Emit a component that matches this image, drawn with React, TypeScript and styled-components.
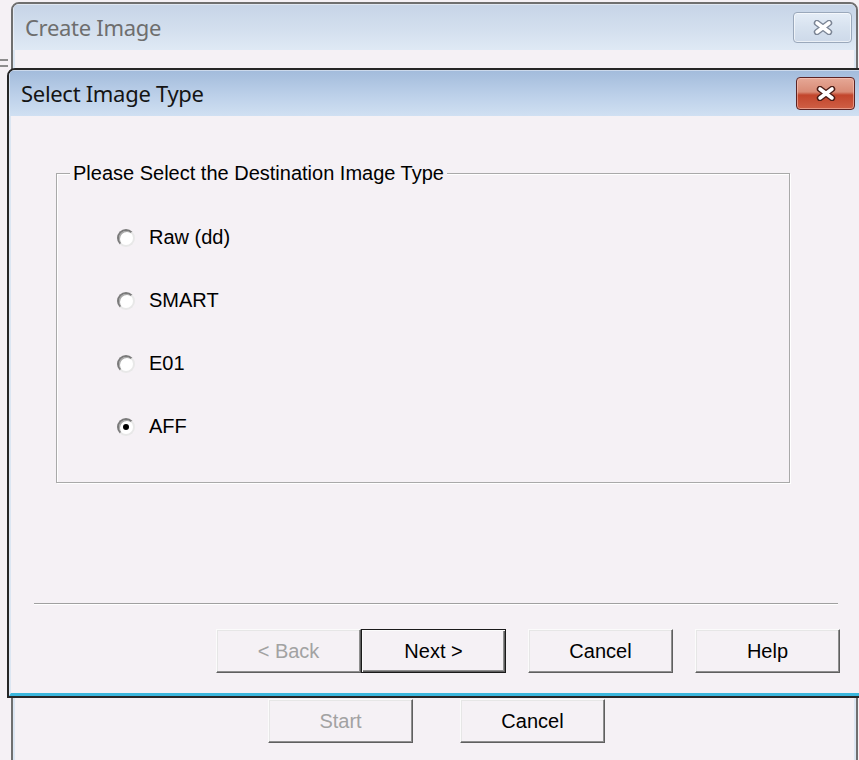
import React from "react";
import styled, { createGlobalStyle, css } from "styled-components";

const GlobalStyle = createGlobalStyle`
  html, body {
    margin: 0;
    padding: 0;
  }
  body {
    background: #f5f1f5;
    font-family: "Liberation Sans", Arial, sans-serif;
    overflow: hidden;
  }
`;

const FACE = "#f5f1f5";

export default function App() {
  return (
    <Desktop>
      <GlobalStyle />
      <EdgeStub />

      <Window $left={11} $top={2} $width={847} $height={780}>
        <TitleBar $padRight={4}>
          <TitleText $dim>Create Image</TitleText>
          <CloseButton>
            <CloseGlyph outline="#7b8595" />
          </CloseButton>
        </TitleBar>
        <Client>
          <BackButtonRow>
            <PushButton disabled>Start</PushButton>
            <PushButton>Cancel</PushButton>
          </BackButtonRow>
        </Client>
      </Window>

      <Window $left={7} $top={68} $width={866} $height={630} $active>
        <TitleBar $padRight={16} $active>
          <TitleText>Select Image Type</TitleText>
          <CloseButton $active>
            <CloseGlyph outline="#4a1c16" />
          </CloseButton>
        </TitleBar>
        <WizardClient>
          <GroupBox>
            <GroupCaption>Please Select the Destination Image Type</GroupCaption>
            <RadioList>
              <RadioRow label="Raw (dd)" />
              <RadioRow label="SMART" />
              <RadioRow label="E01" />
              <RadioRow label="AFF" checked />
            </RadioList>
          </GroupBox>
          <Separator />
          <WizardButtons>
            <PushButton disabled>&lt; Back</PushButton>
            <PushButton $default>Next &gt;</PushButton>
            <PushButton $gap>Cancel</PushButton>
            <PushButton $gap>Help</PushButton>
          </WizardButtons>
        </WizardClient>
      </Window>
    </Desktop>
  );
}

function RadioRow({ label, checked }: { label: string; checked?: boolean }) {
  return (
    <RadioItem>
      <RadioDot $checked={checked} />
      <span>{label}</span>
    </RadioItem>
  );
}

// white "x" with a dark rim, as on the caption buttons
function CloseGlyph({ outline }: { outline: string }) {
  return (
    <svg width="22" height="15" viewBox="0 0 22 15">
      <g strokeLinecap="round">
        <path d="M5 3 L17 12 M17 3 L5 12" stroke={outline} strokeWidth="6.4" />
        <path d="M5 3 L17 12 M17 3 L5 12" stroke="#ffffff" strokeWidth="3.6" />
      </g>
    </svg>
  );
}

const Desktop = styled.div`
  position: relative;
  width: 859px;
  height: 760px;
  overflow: hidden;
  background: ${FACE};
`;

/* edge of another window peeking out on the far left */
const EdgeStub = styled.div`
  position: absolute;
  left: -4px;
  top: 59px;
  width: 12px;
  height: 4px;
  border-top: 2px solid #8d8d8d;
  border-bottom: 2px solid #8d8d8d;
`;

const Window = styled.div<{
  $left: number;
  $top: number;
  $width: number;
  $height: number;
  $active?: boolean;
}>`
  position: absolute;
  left: ${(p) => p.$left}px;
  top: ${(p) => p.$top}px;
  width: ${(p) => p.$width}px;
  height: ${(p) => p.$height}px;
  box-sizing: border-box;
  display: flex;
  flex-direction: column;
  border: 2px solid ${(p) => (p.$active ? "#262626" : "#6f6f6f")};
  border-radius: 8px 8px 0 0;
  background: ${FACE};
  overflow: hidden;
`;

const TitleBar = styled.div<{ $padRight: number; $active?: boolean }>`
  flex: none;
  height: 46px;
  display: flex;
  align-items: center;
  justify-content: space-between;
  padding: 0 ${(p) => p.$padRight}px 0 12px;
  background: ${(p) =>
    p.$active
      ? "linear-gradient(#a2bbdb, #bcd0e9 55%, #d0e0f2)"
      : "linear-gradient(#c6d4e7, #d3dfee 55%, #dfe9f5)"};
  box-shadow: inset 1px 1px 0 rgba(255, 255, 255, 0.45);
`;

const TitleText = styled.span<{ $dim?: boolean }>`
  font-family: "Noto Sans", "Open Sans", sans-serif;
  font-size: 22px;
  color: ${(p) => (p.$dim ? "#6e6e6e" : "#141414")};
  letter-spacing: -0.3px;
`;

const CloseButton = styled.div<{ $active?: boolean }>`
  width: 59px;
  height: 31px;
  box-sizing: border-box;
  display: flex;
  align-items: center;
  justify-content: center;
  border-radius: 4px;
  ${(p) =>
    p.$active
      ? css`
          height: 33px;
          border: 1px solid #5c2323;
          background: linear-gradient(#e6a896, #d98b76 45%, #c2452c 55%, #cf5f45);
          box-shadow: inset 0 0 0 1px rgba(255, 210, 200, 0.5);
        `
      : css`
          border: 1px solid #9aa8bb;
          background: linear-gradient(#e5edf7, #d7e2ef 50%, #cdd9e9);
          box-shadow: inset 0 0 0 1px rgba(255, 255, 255, 0.6);
        `}
`;

const Client = styled.div`
  flex: 1;
  display: flex;
  flex-direction: column;
  justify-content: flex-end;
  border-left: 2px solid #dce6f2;
  border-right: 2px solid #dce6f2;
  background: ${FACE};
`;

const BackButtonRow = styled.div`
  display: flex;
  gap: 47px;
  padding: 0 0 37px 253px;
`;

const WizardClient = styled.div`
  flex: 1;
  display: flex;
  flex-direction: column;
  border-left: 2px solid #dce6f2;
  border-bottom: 3px solid #3bb7dd;
  background: ${FACE};
`;

const GroupBox = styled.div`
  position: relative;
  margin: 57px 0 0 45px;
  width: 734px;
  height: 310px;
  box-sizing: border-box;
  border: 1px solid #a9a9a9;
  box-shadow: 1px 1px 0 #fff, inset 1px 1px 0 #fff;
`;

const GroupCaption = styled.span`
  position: absolute;
  top: -12px;
  left: 13px;
  padding: 0 3px;
  background: ${FACE};
  font-size: 20px;
  line-height: 22px;
  color: #000;
`;

const RadioList = styled.div`
  display: flex;
  flex-direction: column;
  gap: 40px;
  padding: 52px 0 0 60px;
`;

const RadioItem = styled.label`
  display: flex;
  align-items: center;
  gap: 14px;
  height: 23px;
  font-size: 20px;
  color: #000;
`;

const RadioDot = styled.span<{ $checked?: boolean }>`
  position: relative;
  width: 18px;
  height: 18px;
  box-sizing: border-box;
  border-radius: 50%;
  border: 2px solid;
  border-color: #7a7a7a #e8e8e8 #e8e8e8 #7a7a7a;
  background: #fff;
  box-shadow: inset 1px 1px 0 #a8a8a8;

  ${(p) =>
    p.$checked &&
    css`
      &::after {
        content: "";
        position: absolute;
        left: 4px;
        top: 4px;
        width: 6px;
        height: 6px;
        border-radius: 50%;
        background: #000;
      }
    `}
`;

const Separator = styled.div`
  margin: auto 0 0 23px;
  width: 804px;
  height: 1px;
  background: #a0a0a0;
  border-bottom: 1px solid #fff;
`;

const WizardButtons = styled.div`
  display: flex;
  padding: 24px 0 20px 205px;
`;

const PushButton = styled.button<{ $default?: boolean; $gap?: boolean }>`
  width: 145px;
  height: 44px;
  margin-left: ${(p) => (p.$gap ? "22px" : "0")};
  box-sizing: border-box;
  padding: 0;
  font-family: "Liberation Sans", Arial, sans-serif;
  font-size: 20px;
  color: #000;
  background: ${FACE};
  border: 1px solid;
  border-color: #fbfbfb #5f5f5f #5f5f5f #fbfbfb;
  box-shadow: inset -1px -1px 0 #8f8f8f, inset 1px 1px 0 #e6e6e6;

  &:disabled {
    color: #a2a2a2;
  }

  ${(p) =>
    p.$default &&
    css`
      border: 1px solid #1a1a1a;
      box-shadow: inset 1px 1px 0 #fbfbfb, inset -1px -1px 0 #5f5f5f,
        inset -2px -2px 0 #8f8f8f;
    `}
`;
